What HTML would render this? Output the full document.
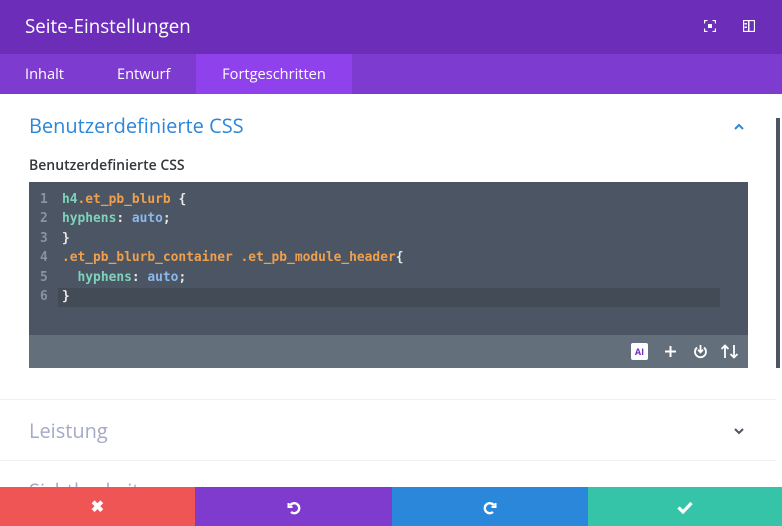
<!DOCTYPE html>
<html><head><meta charset="utf-8"><style>
*{margin:0;padding:0;box-sizing:border-box}
body{width:782px;height:526px;overflow:hidden;background:#fff;font-family:"Open Sans","Liberation Sans",sans-serif;position:relative}
.hdr{position:absolute;left:0;top:0;width:782px;height:54px;background:#6c2eb9;color:#fff;font-size:18.7px;padding:14px 0 0 25px}
.tabs{position:absolute;left:0;top:54px;width:782px;height:40px;background:#7e3bd0}
.tab{position:absolute;top:0;height:40px;line-height:40px;color:#fff;font-size:14.6px}
.code{position:absolute;left:29px;top:182px;width:719px;height:153px;background:#4b5563;font-family:"DejaVu Sans Mono","Liberation Mono",monospace;font-weight:bold;font-size:12.9px}
.ln{position:absolute;left:11px;color:#8a94a0}
.tx{position:absolute;left:33px;white-space:pre}
.o{color:#f0a04c}.g{color:#7fd3bb}.b{color:#8db8ea}.w{color:#e8e8e8}
.tb{position:absolute;left:29px;top:335px;width:719px;height:33px;background:#646f7c}
.bar{position:absolute;top:487px;height:39px;color:#fff;font-size:16px;text-align:center;line-height:39px;font-weight:bold}
</style></head><body>
<div class="hdr">Seite-Einstellungen</div>
<svg style="position:absolute;left:704px;top:20px" width="12" height="12" viewBox="0 0 12 12" fill="none" stroke="#fff" stroke-width="1.3"><path d="M0.5 3.5V0.5H3.5M8.5 0.5H11.5V3.5M11.5 8.5V11.5H8.5M3.5 11.5H0.5V8.5"/><rect x="4" y="4" width="4" height="4" fill="#fff" stroke="none"/></svg>
<svg style="position:absolute;left:743px;top:20px" width="12" height="12" viewBox="0 0 12 12"><rect x="0.5" y="0.5" width="11" height="11" fill="none" stroke="#fff" stroke-width="1.3"/><rect x="5" y="1" width="1.5" height="10" fill="#fff"/><rect x="1.5" y="3" width="2.5" height="1.5" fill="#fff"/><rect x="1.5" y="6.5" width="2.5" height="1.5" fill="#fff"/></svg>
<div class="tabs">
<div class="tab" style="left:25px">Inhalt</div>
<div class="tab" style="left:117px">Entwurf</div>
<div class="tab" style="left:196px;width:156px;background:#8f42ec;text-align:center">Fortgeschritten</div>
</div>
<div style="position:absolute;left:29px;top:112px;font-size:20px;color:#2b87da">Benutzerdefinierte CSS</div>
<svg style="position:absolute;left:733px;top:123px" width="12" height="8" viewBox="0 0 12 8"><path d="M2 6L6 2L10 6" stroke="#2b87da" stroke-width="2" fill="none"/></svg>
<div style="position:absolute;left:29px;top:156px;font-size:14px;font-weight:600;color:#32373c">Benutzerdefinierte CSS</div>
<div style="position:absolute;left:776px;top:118px;width:4px;height:250px;background:#4b5563"></div>
<div class="code">
<div style="position:absolute;left:29px;top:106px;width:662px;height:19px;background:#434b57"></div>
<div class="ln" style="top:10px">1</div><div class="tx" style="top:10px"><span class="g">h4</span><span class="o">.et_pb_blurb</span> <span class="w">{</span></div>
<div class="ln" style="top:29px">2</div><div class="tx" style="top:29px"><span class="g">hyphens</span><span class="w">:</span> <span class="b">auto</span><span class="w">;</span></div>
<div class="ln" style="top:49px">3</div><div class="tx" style="top:49px"><span class="w">}</span></div>
<div class="ln" style="top:68px">4</div><div class="tx" style="top:68px"><span class="o">.et_pb_blurb_container .et_pb_module_header</span><span class="w">{</span></div>
<div class="ln" style="top:88px">5</div><div class="tx" style="top:88px">  <span class="g">hyphens</span><span class="w">:</span> <span class="b">auto</span><span class="w">;</span></div>
<div class="ln" style="top:107px">6</div><div class="tx" style="top:107px"><span class="w">}</span></div>
</div>
<div class="tb">
<div style="position:absolute;left:602px;top:8px;width:17px;height:17px;background:#fff;border-radius:2px;color:#6c2eb9;font-size:9px;font-weight:bold;text-align:center;line-height:17px">AI</div>
<svg style="position:absolute;left:635px;top:10px" width="13" height="13" viewBox="0 0 13 13"><path d="M6.5 1V12M1 6.5H12" stroke="#fff" stroke-width="2"/></svg>
<svg style="position:absolute;left:664px;top:9px" width="15" height="15" viewBox="0 0 15 15" fill="none" stroke="#fff" stroke-width="1.8"><path d="M4 3.5A5.5 5.5 0 1 0 11 3.5"/><path d="M7.5 1V8M5 5.8L7.5 8.3L10 5.8"/></svg>
<svg style="position:absolute;left:691px;top:9px" width="20" height="15" viewBox="0 0 20 15" fill="none" stroke="#fff" stroke-width="1.8"><path d="M5 14V2M1.5 5L5 1.5L8.5 5M14 1V13M10.5 10L14 13.5L17.5 10"/></svg>
</div>
<div style="position:absolute;left:0;top:399px;width:776px;height:1px;background:#eef0f3"></div>
<div style="position:absolute;left:29px;top:417px;font-size:20px;color:#a6a9c8">Leistung</div>
<svg style="position:absolute;left:733px;top:427px" width="12" height="8" viewBox="0 0 12 8"><path d="M2 2L6 6L10 2" stroke="#4b5563" stroke-width="2" fill="none"/></svg>
<div style="position:absolute;left:0;top:460px;width:776px;height:1px;background:#eef0f3"></div>
<div style="position:absolute;left:29px;top:477px;font-size:20px;color:#a6a9c8">Sichtbarkeit</div>
<div class="bar" style="left:0;width:195px;background:#ef5555">✖</div>
<div class="bar" style="left:195px;width:197px;background:#7e3bce"><svg width="14" height="14" viewBox="0 0 14 14" style="vertical-align:middle" fill="none" stroke="#fff" stroke-width="2.4"><path d="M3 4.5A5 5 0 1 1 4 11"/><path d="M1.5 2V6H5.5" stroke-width="2"/></svg></div>
<div class="bar" style="left:392px;width:196px;background:#2b87da"><svg width="14" height="14" viewBox="0 0 14 14" style="vertical-align:middle" fill="none" stroke="#fff" stroke-width="2.4"><path d="M11 4.5A5 5 0 1 0 10 11"/><path d="M12.5 2V6H8.5" stroke-width="2"/></svg></div>
<div class="bar" style="left:588px;width:194px;background:#35c4a7"><svg width="16" height="13" viewBox="0 0 16 13" style="vertical-align:middle" fill="none" stroke="#fff" stroke-width="3.2"><path d="M1.5 6.5L6 11L14.5 2"/></svg></div>
</body></html>
